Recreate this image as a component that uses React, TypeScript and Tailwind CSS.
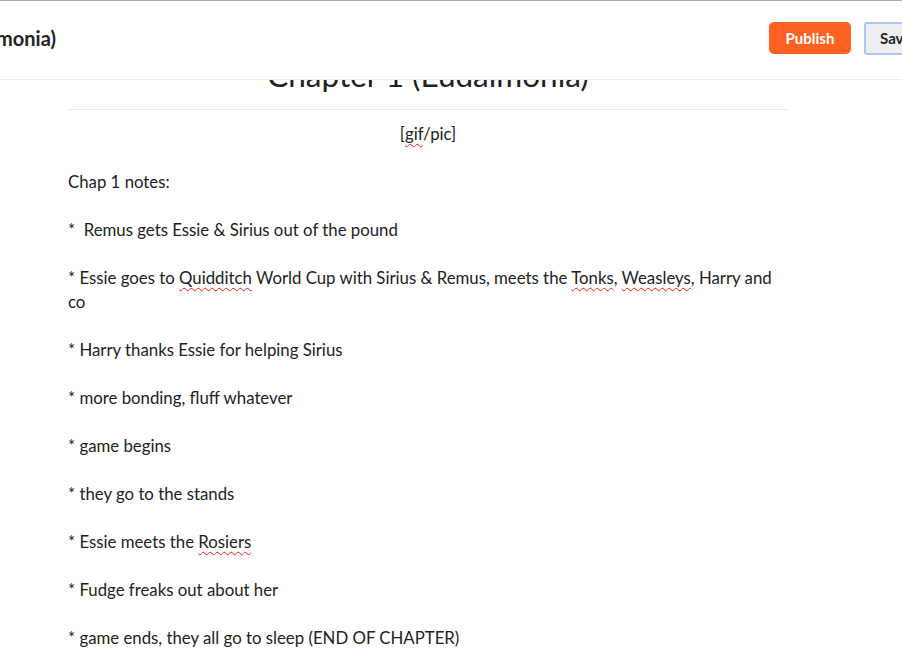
import React from 'react';

const font = { fontFamily: 'Lato, "Open Sans", sans-serif' };

function Typo({ children }: { children: React.ReactNode }) {
  return (
    <span className="underline decoration-wavy decoration-[#e02020] decoration-1 underline-offset-[3px]">
      {children}
    </span>
  );
}

const notes: React.ReactNode[] = [
  <>*&nbsp; Remus gets Essie &amp; Sirius out of the pound</>,
  <>
    * Essie goes to <Typo>Quidditch</Typo> World Cup with Sirius &amp; Remus, meets the <Typo>Tonks</Typo>,{' '}
    <Typo>Weasleys</Typo>, Harry and co
  </>,
  <>* Harry thanks Essie for helping Sirius</>,
  <>* more bonding, fluff whatever</>,
  <>* game begins</>,
  <>* they go to the stands</>,
  <>
    * Essie meets the <Typo>Rosiers</Typo>
  </>,
  <>* Fudge freaks out about her</>,
  <>* game ends, they all go to sleep (END OF CHAPTER)</>,
];

export default function App() {
  return (
    <div className="relative h-[664px] w-full overflow-hidden bg-white text-[#222]" style={font}>
      {/* top bar, sits over the scrolled page */}
      <div className="absolute inset-x-0 top-0 z-10 flex h-[80px] items-center border-t border-b border-t-[#ababab] border-b-[#ececec] bg-white pb-[4px]">
        <div className="flex w-[56px] shrink-0 justify-end whitespace-nowrap text-[20px] font-bold text-[#222]">
          Chapter 1 (Eudaimonia)
        </div>
        <div className="ml-[713px] flex shrink-0 items-center gap-[13px]">
          <button className="h-[32px] w-[82px] rounded-[5px] bg-[#ff6122] text-[15px] font-bold text-white">
            Publish
          </button>
          <button className="h-[33px] w-[80px] rounded-[3px] border-2 border-[#a9c6f5] bg-[#eeeeee] pl-[14px] text-left text-[15px] font-bold text-[#222]">
            Save
          </button>
        </div>
      </div>

      <div className="mx-[68px] w-[720px] pt-[53px]">
        <h1 className="pb-[12px] text-center text-[31.5px] leading-[44px] font-normal">Chapter 1 (Eudaimonia)</h1>
        <div className="border-t border-[#e8e8e8]" />
        <div className="flex flex-col gap-[24px] pt-[12px] text-[16.8px] leading-[24px]">
          <p className="text-center">
            [<Typo>gif</Typo>/pic]
          </p>
          <p>Chap 1 notes:</p>
          {notes.map((n, i) => (
            <p key={i}>{n}</p>
          ))}
        </div>
      </div>
    </div>
  );
}
